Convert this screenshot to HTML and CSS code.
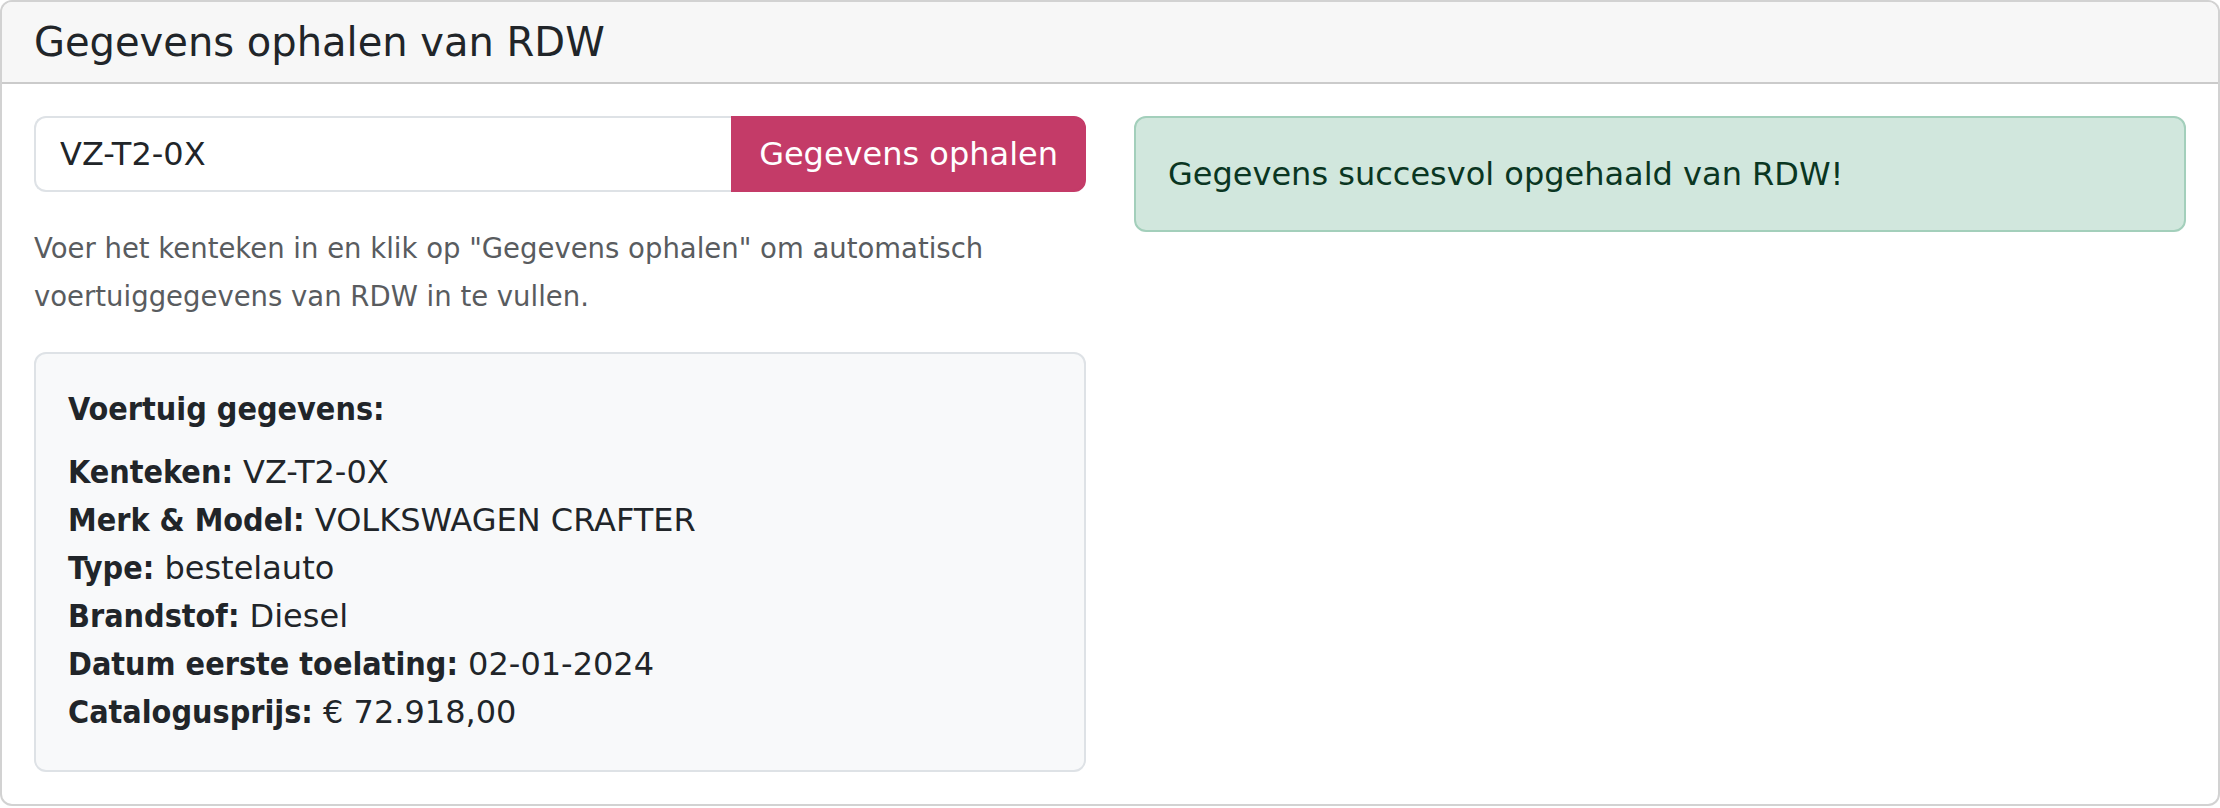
FILE: index.html
```html
<!DOCTYPE html>
<html lang="nl">
<head>
<meta charset="utf-8">
<title>Gegevens ophalen van RDW</title>
<link rel="stylesheet" href="styles.css">
</head>
<body>
<div class="card">
  <div class="card-header">
    <h5 class="card-title">Gegevens ophalen van RDW</h5>
  </div>
  <div class="card-body">
    <div class="col">
      <div class="input-group">
        <input class="form-control" type="text" value="VZ-T2-0X">
        <button class="btn-fetch" type="button">Gegevens ophalen</button>
      </div>
      <p class="help">Voer het kenteken in en klik op "Gegevens ophalen" om automatisch voertuiggegevens van RDW in te vullen.</p>
      <div class="info-box">
        <h6 class="info-title">Voertuig gegevens:</h6>
        <div class="info-row"><strong>Kenteken:</strong> VZ-T2-0X</div>
        <div class="info-row"><strong>Merk &amp; Model:</strong> VOLKSWAGEN CRAFTER</div>
        <div class="info-row"><strong>Type:</strong> bestelauto</div>
        <div class="info-row"><strong>Brandstof:</strong> Diesel</div>
        <div class="info-row"><strong>Datum eerste toelating:</strong> 02-01-2024</div>
        <div class="info-row"><strong>Catalogusprijs:</strong> € 72.918,00</div>
      </div>
    </div>
    <div class="col">
      <div class="alert-success">Gegevens succesvol opgehaald van RDW!</div>
    </div>
  </div>
</div>
</body>
</html>
```

FILE: styles.css
```css
html, body {
  margin: 0;
  padding: 0;
  background: #ffffff;
}

body {
  font-family: "DejaVu Sans", "Liberation Sans", sans-serif;
  font-size: 32px;
  line-height: 48px;
  color: #212529;
}

.card {
  border: 2px solid rgba(0, 0, 0, 0.175);
  border-radius: 12px;
  overflow: hidden;
  background: #ffffff;
}

.card-header {
  background: #f7f7f7;
  border-bottom: 2px solid rgba(0, 0, 0, 0.175);
  padding: 16px 32px;
}

.card-title {
  margin: 0;
  font-size: 40px;
  line-height: 48px;
  font-weight: 400;
  color: #212529;
}

.card-body {
  padding: 32px;
  display: grid;
  grid-template-columns: 1fr 1fr;
  column-gap: 48px;
  align-items: start;
}

.input-group {
  display: flex;
  margin-bottom: 32px;
}

.form-control {
  flex: 1 1 auto;
  min-width: 0;
  font-family: inherit;
  font-size: 32px;
  line-height: 48px;
  height: 76px;
  box-sizing: border-box;
  padding: 12px 24px;
  border: 2px solid #dee2e6;
  border-right: none;
  border-radius: 12px 0 0 12px;
  color: #212529;
  background: #ffffff;
  outline: none;
}

.btn-fetch {
  flex: 0 0 auto;
  font-family: inherit;
  font-size: 32px;
  line-height: 48px;
  height: 76px;
  box-sizing: border-box;
  padding: 12px 26px;
  border: 2px solid #c43b68;
  border-radius: 0 12px 12px 0;
  background: #c43b68;
  color: #ffffff;
}

.help {
  margin: 0 0 32px;
  font-size: 27.5px;
  line-height: 48px;
  color: #595c5f;
}

.info-box {
  background: #f8f9fa;
  border: 2px solid #dee2e6;
  border-radius: 12px;
  padding: 36px 32px 34px;
}

.info-title {
  margin: 0 0 20px;
  font-size: 32px;
  line-height: 38px;
  font-family: "DejaVu Sans Condensed", "DejaVu Sans", sans-serif;
  font-stretch: semi-condensed;
  font-weight: 700;
  color: #212529;
}

.info-row {
  line-height: 48px;
}

.info-row strong {
  font-family: "DejaVu Sans Condensed", "DejaVu Sans", sans-serif;
  font-stretch: semi-condensed;
  font-weight: 700;
}

.alert-success {
  background: #d1e7dd;
  border: 2px solid #a3cfbb;
  border-radius: 12px;
  color: #0a3622;
  padding: 32px;
  line-height: 48px;
}
```
